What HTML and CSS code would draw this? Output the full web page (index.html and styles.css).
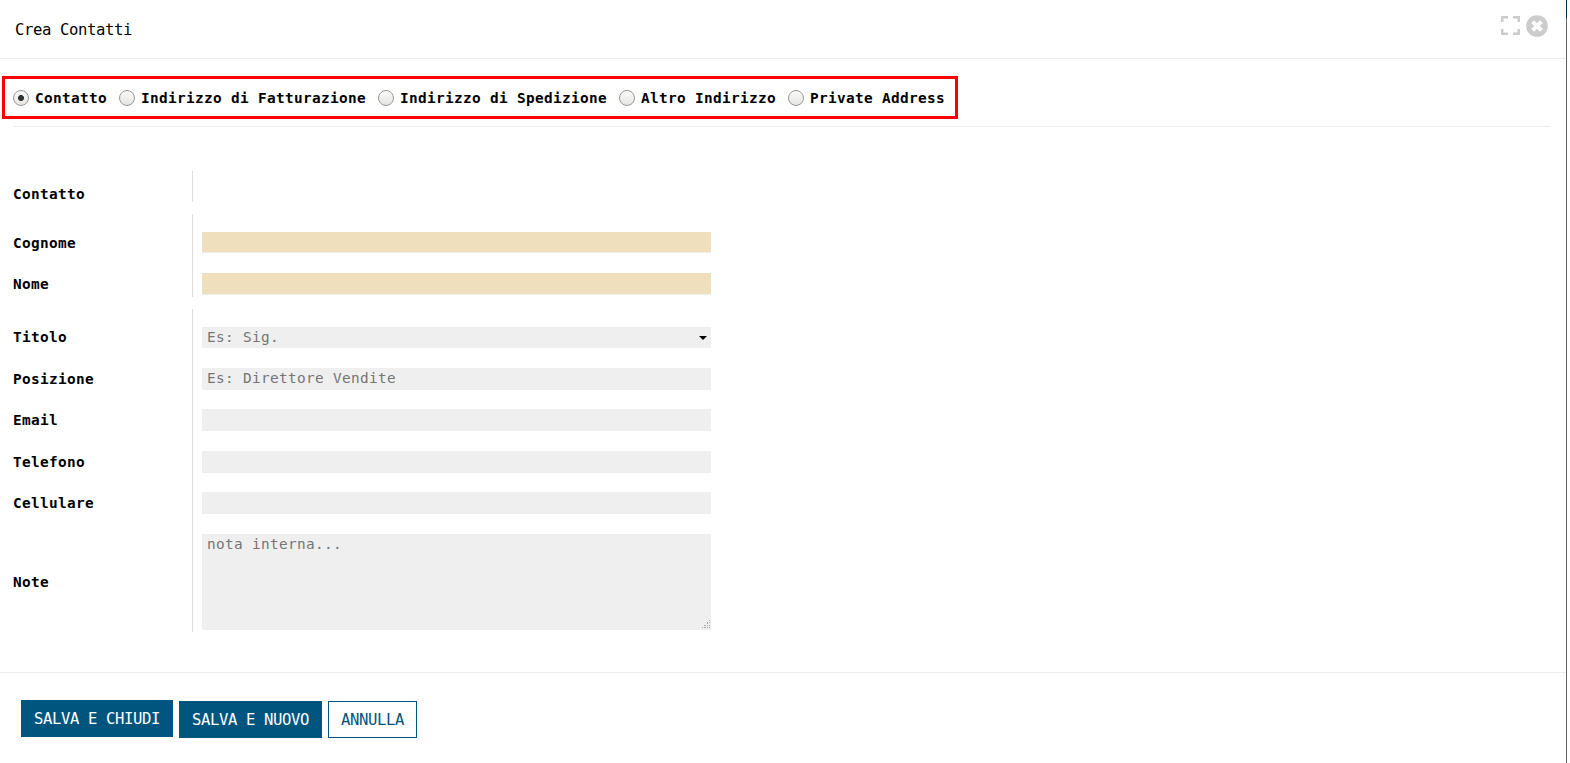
FILE: index.html
```html
<!DOCTYPE html>
<html lang="it">
<head>
<meta charset="utf-8">
<title>Crea Contatti</title>
<link rel="stylesheet" href="styles.css">
</head>
<body>
<div class="modal">
  <header class="modal-header">
    <h1 class="title">Crea Contatti</h1>
    <div class="tools">
      <svg class="icon-expand" width="19" height="19" viewBox="0 0 19 19"><path d="M0 6V0H7V2.5H2.5V6ZM12 0H19V6H16.5V2.5H12ZM0 13H2.5V16.5H7V19H0ZM16.5 13H19V19H12V16.5H16.5Z"/></svg>
      <svg class="icon-close" width="22" height="22" viewBox="0 0 22 22"><circle cx="11" cy="11" r="10.8"/><path d="M6.6 6.6l8.8 8.8M15.4 6.6l-8.8 8.8"/></svg>
    </div>
  </header>
  <main class="modal-body">
    <div class="types">
      <label class="type"><span class="radio checked"></span>Contatto</label>
      <label class="type"><span class="radio"></span>Indirizzo di Fatturazione</label>
      <label class="type"><span class="radio"></span>Indirizzo di Spedizione</label>
      <label class="type"><span class="radio"></span>Altro Indirizzo</label>
      <label class="type"><span class="radio"></span>Private Address</label>
    </div>
    <div class="divider"></div>
    <section class="group group-contact">
      <div class="label">Contatto</div><div class="cell"></div>
    </section>
    <section class="group group-name">
      <div class="label">Cognome</div><div class="cell"><div class="field required short"></div></div>
      <div class="label">Nome</div><div class="cell"><div class="field required"></div></div>
    </section>
    <section class="group group-details">
      <div class="label">Titolo</div><div class="cell"><div class="field select">Es: Sig.<svg class="caret" width="8" height="4" viewBox="0 0 8 4"><path d="M0 0H8L4 4Z"/></svg></div></div>
      <div class="label">Posizione</div><div class="cell"><div class="field">Es: Direttore Vendite</div></div>
      <div class="label">Email</div><div class="cell"><div class="field"></div></div>
      <div class="label">Telefono</div><div class="cell"><div class="field"></div></div>
      <div class="label">Cellulare</div><div class="cell"><div class="field"></div></div>
      <div class="label">Note</div><div class="cell"><div class="field note">nota interna...<svg class="grip" width="9" height="9" viewBox="0 0 9 9"><path d="M7 0h1v1h-1zM5 2h1v1h-1zM7 2h1v1h-1zM5 3h1v1h-1zM2 5h1v1h-1zM3 5h1v1h-1zM5 5h1v1h-1zM7 5h1v1h-1zM0 7h1v1h-1zM2 7h1v1h-1zM3 7h1v1h-1zM5 7h1v1h-1zM7 7h1v1h-1z"/></svg></div></div>
    </section>
  </main>
  <footer class="modal-footer">
    <button class="btn primary first">SALVA E CHIUDI</button>
    <button class="btn primary">SALVA E NUOVO</button>
    <button class="btn">ANNULLA</button>
  </footer>
</div>
<div class="backdrop"></div>
</body>
</html>
```

FILE: styles.css
```css
* { box-sizing: border-box; }
body {
  margin: 0;
  height: 763px;
  overflow: hidden;
  display: flex;
  background: #fff;
  color: #000;
  font: 14.4px/18px "DejaVu Sans Mono", monospace;
  letter-spacing: 0.335px;
}
.modal { width: 1566px; height: 763px; }
.backdrop { width: 1px; height: 763px; background: linear-gradient(#002a3f 18px, #666 18px); }
.modal-header {
  height: 59px;
  padding: 15px 18px 0 15px;
  display: flex;
  justify-content: space-between;
  border-bottom: 1px solid #eee;
}
.title { margin: 5px 0 0; font-size: 15.6px; line-height: 20px; font-weight: 400; letter-spacing: -0.392px; }
.tools { display: flex; gap: 6px; fill: #ccc; }
.icon-expand { margin-top: 1px; }
.icon-close path { stroke: #fff; stroke-width: 4; }
.modal-body { height: 613px; padding-top: 17px; }
.types {
  margin-left: 2px;
  width: 956px;
  height: 43px;
  padding-left: 8px;
  border: 3px solid #f00;
  display: flex;
  align-items: center;
  gap: 12px;
  font-weight: 700;
}
.type { display: flex; align-items: center; gap: 6px; white-space: nowrap; }
.radio {
  width: 16px;
  height: 16px;
  border: 1px solid #989994;
  border-radius: 50%;
  background: linear-gradient(#fbfbfb, #e4e4e2);
}
.checked { background: radial-gradient(circle, #2e3436 2.6px, transparent 3.4px), linear-gradient(#fbfbfb, #e4e4e2); }
.divider { height: 1px; margin: 7px 16px 0 13px; background: #eee; }
.group { margin-left: 13px; display: grid; grid-template-columns: 179px 519px; }
.label { display: flex; align-items: center; font-weight: 700; }
.cell { border-left: 1px solid #ddd; padding-left: 9px; display: flex; align-items: flex-end; }
.group-contact { margin-top: 44px; grid-template-rows: 31px; }
.group-contact .label { padding-top: 15px; }
.group-name { margin-top: 12px; grid-template-rows: 39px 44px; }
.group-name .label { padding-top: 19px; }
.group-name .label:nth-child(3) { padding-top: 17px; }
.group-name .cell:last-child { padding-bottom: 2px; }
.group-details { margin-top: 12px; grid-template-rows: 39px 42px 41px 42px 41px 118px; }
.group-details .label { align-items: flex-end; padding-bottom: 2px; }
.group-details .label:nth-last-child(2) { padding-bottom: 41px; }
.group-details .cell:last-child { padding-bottom: 2px; }
.field {
  position: relative;
  width: 509px;
  height: 22px;
  padding: 1px 5px;
  background: #efefef;
  color: #757575;
}
.required { background: #f0dfbd; border-bottom: 1px solid #eee; }
.short, .select { height: 21px; }
.note { height: 96px; }
.caret { position: absolute; right: 4px; top: 9px; fill: #000; }
.grip { position: absolute; right: 0; bottom: 1px; fill: #aaa; }
.modal-footer {
  height: 91px;
  padding: 28px 0 0 21px;
  border-top: 1px solid #eee;
  display: flex;
  gap: 6px;
}
.btn {
  height: 37px;
  padding: 0 12px;
  border: 1px solid #00557f;
  background: #fff;
  color: #00557f;
  font: 15.6px/20px "DejaVu Sans Mono", monospace;
  letter-spacing: -0.392px;
}
.primary { background: #00557f; color: #fff; }
.first { margin-top: -1px; }
```
